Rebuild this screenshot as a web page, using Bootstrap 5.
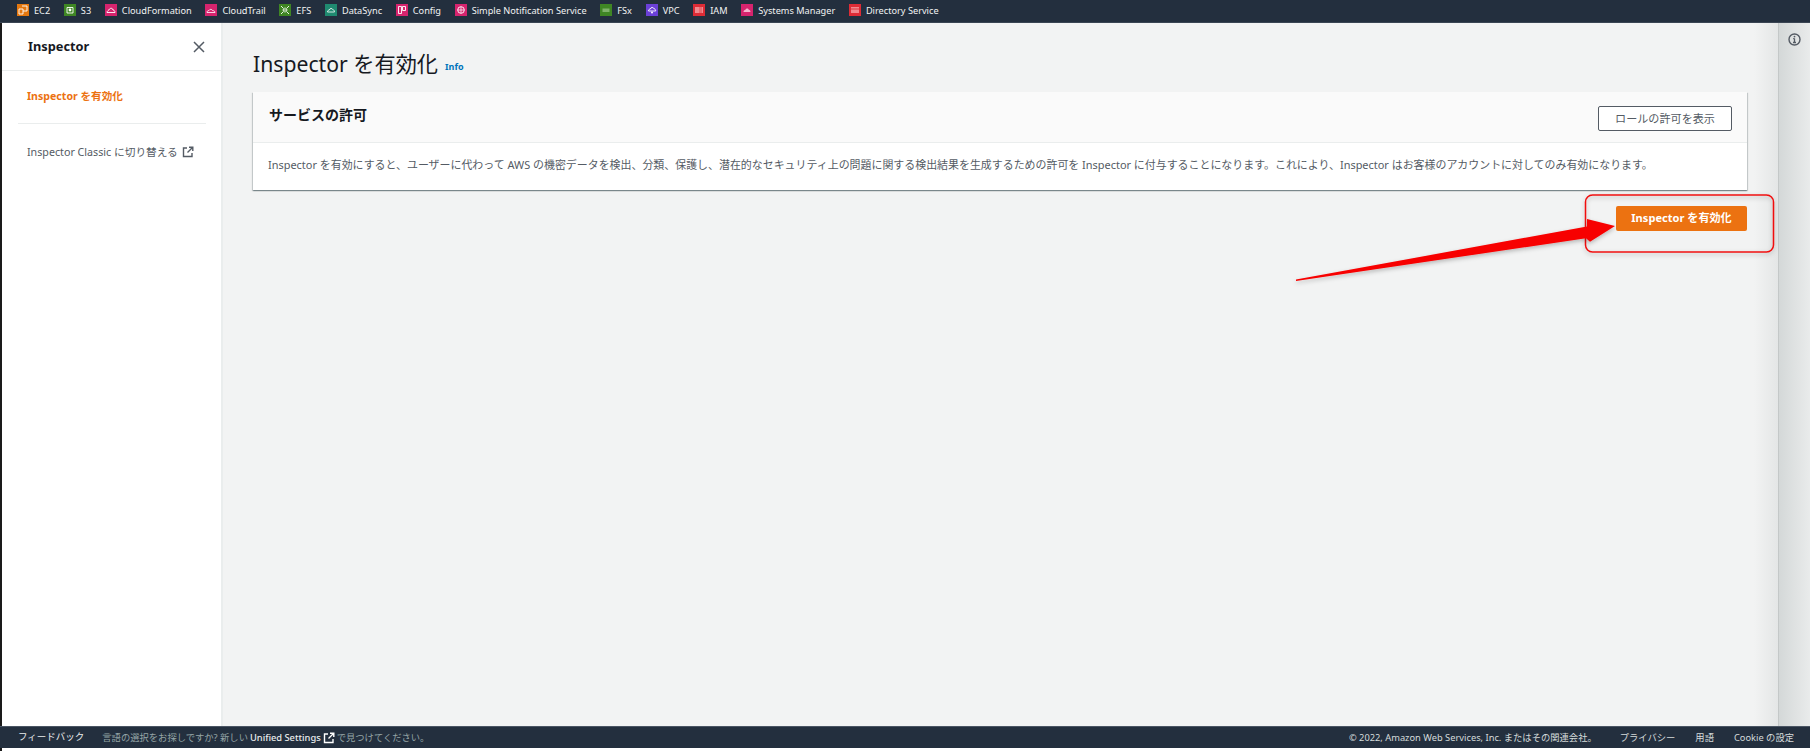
<!DOCTYPE html>
<html lang="ja">
<head>
<meta charset="utf-8">
<title>Inspector</title>
<link href="https://cdn.jsdelivr.net/npm/bootstrap@5.3.0/dist/css/bootstrap.min.css" rel="stylesheet">
<style>
html,body{height:751px;overflow:hidden}
body{font-family:"Noto Sans","Noto Sans CJK JP",sans-serif;font-size:12px;color:#16191f;background:#fff;position:relative}
.page-shell{height:751px;padding-left:2px;background:linear-gradient(90deg,#1a1a1a 2px,#fff 2px)}
.shortcut-bar{height:23px;background:#232f3e;margin-left:-2px;padding:0 0 1px 17px;gap:13.7px;color:#fff;font-size:9.2px;border-bottom:1px solid #3a4553}
.shortcut{gap:5px;white-space:nowrap;color:#f2f3f3}
.svc{width:12px;height:12px;flex:none;display:block}
.work-area{height:703px}
.side-nav{width:221px;flex:none;border-right:2px solid #eaeded;background:#fff}
.side-head{height:48px;padding:0 16px 0 26px;border-bottom:1px solid #eaeded;font-size:12.8px;font-weight:700}
.side-link-on{color:#ec7211;font-weight:700;font-size:10.6px;padding:0 0 0 25px;height:52px}
.side-rule{margin:0 15px 0 16px;height:1px;background:#eaeded}
.side-link{color:#545b64;font-size:10.7px;padding:0 0 0 25px;height:56px}
.main-pane{background:linear-gradient(90deg,#f2f3f3 calc(100% - 24px),#e4e6e6 100%);min-width:0}
.page-title{font-size:21.2px;font-weight:400;line-height:28px;margin:0;color:#16191f}
.info-tag{color:#0073bb;font-size:9px;font-weight:700;margin-left:7px;position:relative;top:3px}
.title-row{padding:12px 0 0 30px;height:69px}
.perm-panel{margin:0 31px 0 30px;background:#fff;border:0;border-radius:0;box-shadow:0 1px 1px 0 rgba(0,28,36,.3),1px 1px 1px 0 rgba(0,28,36,.15),-1px 1px 1px 0 rgba(0,28,36,.15)}
.perm-head{height:51px;background:#fafafa;border-bottom:1px solid #eaeded;padding:2px 15px 0 16px}
.perm-title{font-size:14px;font-weight:700;margin:0 0 5px;color:#16191f}
.perm-body{height:47px;padding:0 0 2px 15px;font-size:10.95px;color:#545b64;white-space:nowrap}
.btn-role{width:134px;height:25px;border:1px solid #545b64;border-radius:2px;background:#fff;color:#545b64;font-size:11.1px;font-weight:400;padding:0;line-height:21px}
.btn-go{width:131px;height:25px;background:#ec7211;border:0;border-radius:2px;color:#fff;font-size:11.1px;font-weight:700;padding:0}
.action-row{margin:16px 31px 0 0}
.tool-rail{width:32px;flex:none;background:linear-gradient(90deg,#d4d8d8,#e9ebeb);border-left:1px solid #c4c8c8;padding-top:10px}
.foot-bar{height:22px;background:#232f3e;margin-left:-2px;border-top:1px solid #4a5563;color:#d5dbdb;font-size:9.3px;padding:0 16px 0 18px}
.foot-fb{color:#eaeded;font-size:9.5px;margin-right:18px}
.foot-note{color:#95a5a6;gap:2px}
.foot-note b{color:#eaeded;font-weight:500}
.foot-links{gap:20px}
.foot-copy{margin-right:3px}
.mark-over{position:absolute;left:0;top:0;pointer-events:none}
</style>
</head>
<body>
<div class="page-shell d-flex flex-column">
  <div class="shortcut-bar d-flex align-items-center">
    <span class="shortcut d-flex align-items-center"><svg class="svc" viewBox="0 0 12 12"><rect width="12" height="12" fill="#e5780f"/><path d="M2 5h4v5H2zM5 2h5v5H6" fill="none" stroke="#fff" stroke-width=".9"/></svg>EC2</span>
    <span class="shortcut d-flex align-items-center"><svg class="svc" viewBox="0 0 12 12"><rect width="12" height="12" fill="#3f8624"/><path d="M3 3.500h6v5.500H3z" fill="none" stroke="#fff" stroke-width=".9"/><circle cx="6" cy="6" r="1.400" fill="#fff"/></svg>S3</span>
    <span class="shortcut d-flex align-items-center"><svg class="svc" viewBox="0 0 12 12"><rect width="12" height="12" fill="#d6246e"/><path d="M2 8.500c0-2 2-2 2.500-3.500 1.500-1.500 3.500-.5 3.500 1 1.500 0 2 1.500 2 2.500z" fill="none" stroke="#fff" stroke-width=".9"/></svg>CloudFormation</span>
    <span class="shortcut d-flex align-items-center"><svg class="svc" viewBox="0 0 12 12"><rect width="12" height="12" fill="#d6246e"/><path d="M2 8.500c0-1.500 1-2 2-2 .5-1.500 3-1.500 3.500 0 1.500 0 2.500 1 2.500 2z" fill="none" stroke="#fff" stroke-width=".8"/></svg>CloudTrail</span>
    <span class="shortcut d-flex align-items-center"><svg class="svc" viewBox="0 0 12 12"><rect width="12" height="12" fill="#3f8624"/><path d="M2 2l2 2M10 2L8 4M2 10l2-2M10 10L8 8M4 6h4" stroke="#fff" stroke-width=".9"/><circle cx="6" cy="6" r="2" fill="none" stroke="#fff" stroke-width=".7"/></svg>EFS</span>
    <span class="shortcut d-flex align-items-center"><svg class="svc" viewBox="0 0 12 12"><rect width="12" height="12" fill="#1f8a70"/><path d="M2.500 8c0-1.500 1-2 1.800-2 .5-2 3-2 3.500-.3 1.200 0 1.700 1.300 1.700 2.300z" fill="none" stroke="#fff" stroke-width=".8"/></svg>DataSync</span>
    <span class="shortcut d-flex align-items-center"><svg class="svc" viewBox="0 0 12 12"><rect width="12" height="12" fill="#d6246e"/><path d="M2.500 2.500h3v7h-3zM6.500 2.500h3v4h-3z" fill="none" stroke="#fff" stroke-width=".9"/></svg>Config</span>
    <span class="shortcut d-flex align-items-center"><svg class="svc" viewBox="0 0 12 12"><rect width="12" height="12" fill="#d6246e"/><circle cx="6" cy="6" r="3.300" fill="none" stroke="#fff" stroke-width=".9"/><path d="M2.700 6h6.600M6 2.700v6.600" stroke="#fff" stroke-width=".7"/></svg>Simple Notification Service</span>
    <span class="shortcut d-flex align-items-center"><svg class="svc" viewBox="0 0 12 12"><rect width="12" height="12" fill="#3f8624"/><path d="M2.500 4.500h7v3.500h-7z" fill="#7fb26a"/></svg>FSx</span>
    <span class="shortcut d-flex align-items-center"><svg class="svc" viewBox="0 0 12 12"><rect width="12" height="12" fill="#6b40d8"/><path d="M2.500 7c0-1.500 1-2 1.800-2 .5-2 3.200-2 3.700-.2 1.200 0 1.700 1.200 1.700 2.200z" fill="none" stroke="#fff" stroke-width=".9"/><circle cx="6" cy="8.500" r="1" fill="#fff"/></svg>VPC</span>
    <span class="shortcut d-flex align-items-center"><svg class="svc" viewBox="0 0 12 12"><rect width="12" height="12" fill="#dd2c36"/><path d="M2 3h8v6H2z" fill="#f08a8f"/><path d="M6 4h3M6 6h3M6 8h3" stroke="#dd2c36" stroke-width=".7"/></svg>IAM</span>
    <span class="shortcut d-flex align-items-center"><svg class="svc" viewBox="0 0 12 12"><rect width="12" height="12" fill="#d6246e"/><path d="M2.500 8c0-1.500 1-2 1.800-2 .5-2 3-2 3.500-.3 1.200 0 1.700 1.300 1.700 2.300z" fill="#f4b5cf"/></svg>Systems Manager</span>
    <span class="shortcut d-flex align-items-center"><svg class="svc" viewBox="0 0 12 12"><rect width="12" height="12" fill="#dd2c36"/><path d="M2 3h8v6H2z" fill="#f08a8f"/><path d="M2 5h8" stroke="#dd2c36" stroke-width=".9"/></svg>Directory Service</span>
  </div>

  <div class="work-area d-flex">
    <nav class="side-nav d-flex flex-column">
      <div class="side-head d-flex align-items-center justify-content-between">
        <span>Inspector</span>
        <svg width="12" height="12" viewBox="0 0 12 12"><path d="M1 1l10 10M11 1L1 11" stroke="#545b64" stroke-width="1.500" fill="none"/></svg>
      </div>
      <div class="side-link-on d-flex align-items-center">Inspector を有効化</div>
      <div class="side-rule"></div>
      <div class="side-link d-flex align-items-center gap-1">Inspector Classic に切り替える
        <svg width="12" height="12" viewBox="0 0 12 12"><path d="M5 2H1.500v8.500H10V7M7 1.200h3.800V5M10.500 1.500L5.500 6.500" fill="none" stroke="#545b64" stroke-width="1.400"/></svg>
      </div>
    </nav>

    <main class="main-pane flex-grow-1 d-flex flex-column">
      <div class="title-row d-flex align-items-center">
        <h1 class="page-title">Inspector を有効化</h1><span class="info-tag">Info</span>
      </div>
      <section class="perm-panel card">
        <div class="perm-head d-flex align-items-center justify-content-between">
          <h2 class="perm-title">サービスの許可</h2>
          <button class="btn btn-role" type="button">ロールの許可を表示</button>
        </div>
        <div class="perm-body d-flex align-items-center">Inspector を有効にすると、ユーザーに代わって AWS の機密データを検出、分類、保護し、潜在的なセキュリティ上の問題に関する検出結果を生成するための許可を Inspector に付与することになります。これにより、Inspector はお客様のアカウントに対してのみ有効になります。</div>
      </section>
      <div class="action-row d-flex justify-content-end">
        <button class="btn btn-go" type="button">Inspector を有効化</button>
      </div>
    </main>
    <aside class="tool-rail d-flex justify-content-center align-items-start">
      <svg width="13" height="13" viewBox="0 0 13 13"><circle cx="6.500" cy="6.500" r="5.500" fill="none" stroke="#545b64" stroke-width="1.400"/><path d="M6.500 5.500v4M5 9.500h3M5.200 5.700h1.300" stroke="#545b64" stroke-width="1.300" fill="none"/><circle cx="6.500" cy="3.600" r=".9" fill="#545b64"/></svg>
    </aside>
  </div>

  <footer class="foot-bar d-flex align-items-center justify-content-between">
    <div class="d-flex align-items-center">
      <span class="foot-fb">フィードバック</span>
      <span class="foot-note d-flex align-items-center">言語の選択をお探しですか? 新しい <b>Unified Settings</b>
        <svg width="12" height="12" viewBox="0 0 12 12"><path d="M5 2H1.500v8.500H10V7M7 1.200h3.800V5M10.500 1.500L5.500 6.500" fill="none" stroke="#fff" stroke-width="1.400"/></svg>
        で見つけてください。</span>
    </div>
    <div class="foot-links d-flex align-items-center">
      <span class="foot-copy">© 2022, Amazon Web Services, Inc. またはその関連会社。</span>
      <span>プライバシー</span>
      <span>用語</span>
      <span>Cookie の設定</span>
    </div>
  </footer>
</div>

<svg class="mark-over" width="1810" height="751" viewBox="0 0 1810 751">
  <defs><filter id="soft" x="-5%" y="-20%" width="110%" height="140%"><feDropShadow dx="0" dy="2" stdDeviation="2" flood-color="#000" flood-opacity=".25"/></filter></defs>
  <rect x="1585.500" y="195" width="188" height="57" rx="7" fill="none" stroke="#f01010" stroke-width="1.500" filter="url(#soft)"/>
  <path d="M1296 279.500L1587 226.500L1587 219L1615 226L1590 241.700L1586 238.300L1296 281z" fill="#f70000" filter="url(#soft)"/>
</svg>
</body>
</html>
